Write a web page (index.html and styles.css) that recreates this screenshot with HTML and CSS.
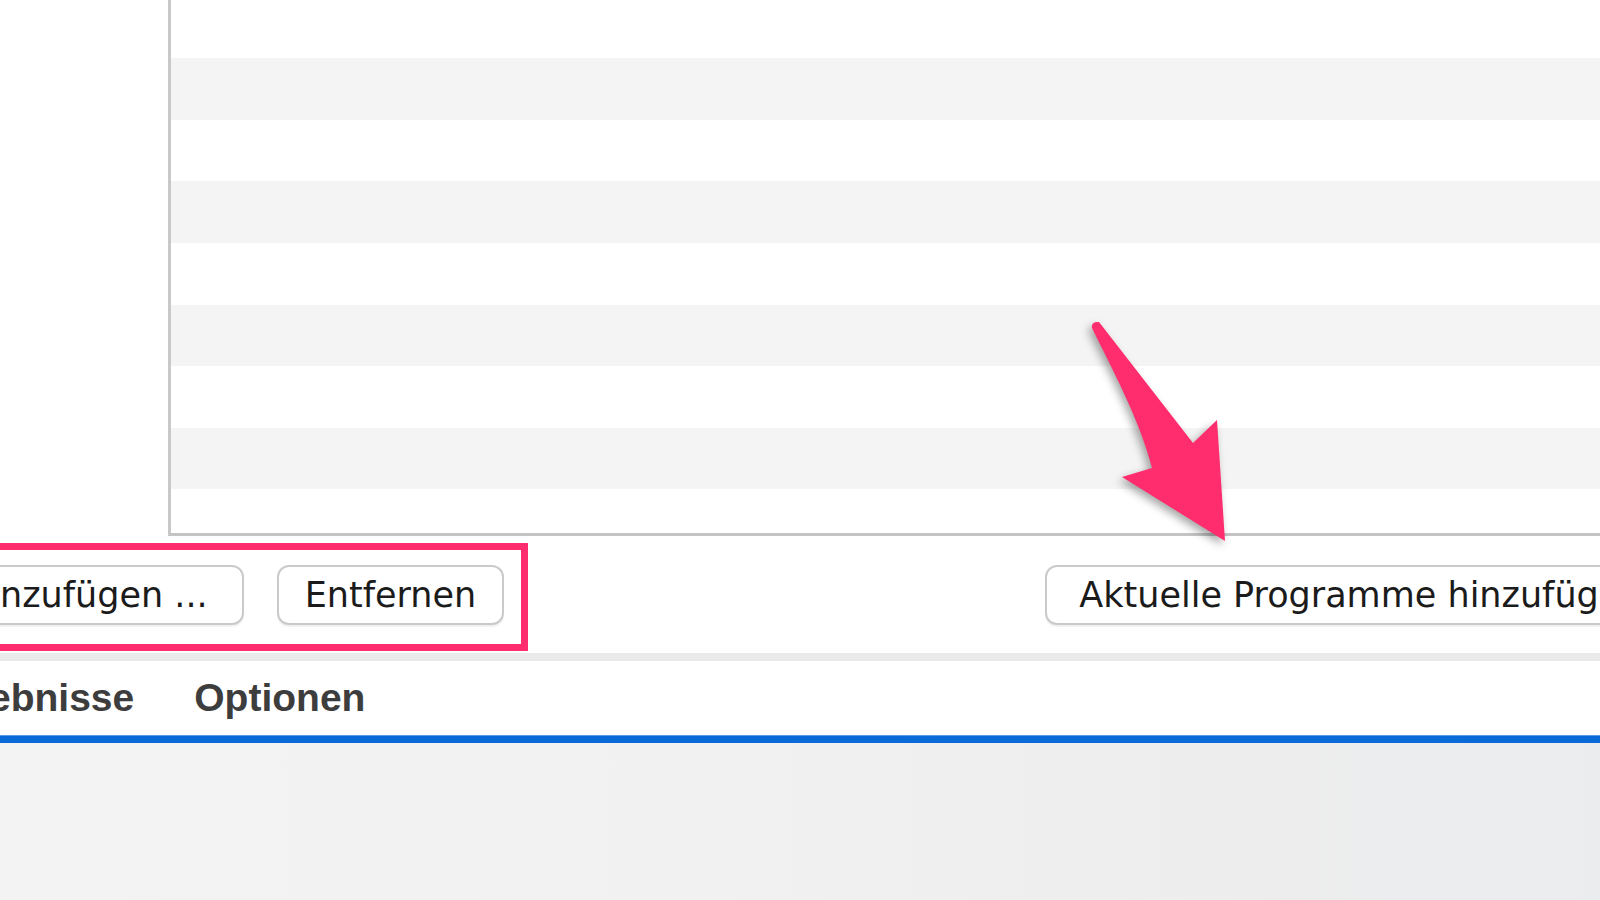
FILE: index.html
```html
<!DOCTYPE html>
<html lang="de">
<head>
<meta charset="utf-8">
<title>Programme</title>
<link rel="stylesheet" href="styles.css">
</head>
<body>
<div class="window">
  <div class="top">
    <div class="sidebar"></div>
    <div class="list">
      <div class="row row-first"></div>
      <div class="row alt"></div>
      <div class="row"></div>
      <div class="row alt"></div>
      <div class="row"></div>
      <div class="row alt"></div>
      <div class="row"></div>
      <div class="row alt"></div>
      <div class="row"></div>
    </div>
  </div>
  <div class="actions">
    <div class="btn-group">
      <button class="btn btn-add">Hinzufügen ...</button>
      <button class="btn">Entfernen</button>
    </div>
    <button class="btn btn-wide">Aktuelle Programme hinzufügen</button>
  </div>
  <div class="sep"></div>
  <div class="tabs">
    <span class="tab tab-first">Ergebnisse</span>
    <span class="tab">Optionen</span>
  </div>
  <div class="blue"></div>
  <div class="desktop"></div>
</div>

<div class="highlight"></div>
<svg class="arrow" viewBox="0 0 160 245" width="160" height="245" aria-hidden="true">
  <path d="M12 18 Q11 11 19 12 L113 133 L137 110 L145 231 L42 167 L72 158 C60 110 30 55 12 18 Z" fill="#ff2d6d"/>
</svg>
</body>
</html>
```

FILE: styles.css
```css
html, body {
  margin: 0;
  padding: 0;
}

body {
  width: 1600px;
  height: 900px;
  overflow: hidden;
  position: relative;
  background: #ffffff;
  font-family: "DejaVu Sans", "Liberation Sans", sans-serif;
}

.window {
  display: flex;
  flex-direction: column;
  width: 1600px;
  height: 900px;
}

.top {
  display: flex;
  height: 536px;
  flex: none;
}

.sidebar {
  width: 168px;
  flex: none;
  background: #ffffff;
}

.list {
  flex: 1;
  border-left: 3px solid #c8c8c8;
  border-bottom: 3px solid #c4c4c4;
  overflow: hidden;
  display: flex;
  flex-direction: column;
}

.row {
  height: 61.65px;
  flex: none;
  background: #ffffff;
}

.row-first {
  height: 58px;
}

.row.alt {
  background: #f4f4f4;
}

.actions {
  height: 117px;
  flex: none;
  display: flex;
  align-items: flex-start;
  padding-top: 29px;
  box-sizing: border-box;
  background: #ffffff;
}

.btn-group {
  display: flex;
  gap: 33px;
  margin-left: -64px;
}

.btn {
  height: 60px;
  padding: 0 26px;
  border: 2px solid #cacaca;
  border-radius: 12px;
  background: #ffffff;
  box-shadow: 0 2px 1px rgba(0, 0, 0, 0.06);
  font-family: "DejaVu Sans", "Liberation Sans", sans-serif;
  font-size: 35px;
  color: #1b1b1b;
  white-space: nowrap;
  line-height: 1;
  flex: none;
}

.btn-add {
  padding-right: 34px;
}

.btn-wide {
  margin-left: 541px;
  padding-left: 32px;
}

.sep {
  height: 8px;
  flex: none;
  background: #eaeaea;
}

.tabs {
  height: 74px;
  flex: none;
  display: flex;
  align-items: center;
  gap: 60px;
  background: #ffffff;
  font-family: "Liberation Sans", Arial, sans-serif;
  font-weight: bold;
  font-size: 39px;
  color: #3d3d3d;
}

.tab-first {
  margin-left: -76px;
}

.blue {
  height: 7px;
  flex: none;
  background: #0a6bd8;
  border-top: 1px solid #5a9be3;
}

.desktop {
  flex: 1;
  background: linear-gradient(to right, #f3f3f3 0%, #f1f1f1 45%, #eeeeee 70%, #ebecee 100%);
}

.highlight {
  position: absolute;
  left: -20px;
  top: 543px;
  width: 534px;
  height: 94px;
  border: 7px solid #ff2d6e;
}

.arrow {
  position: absolute;
  left: 1080px;
  top: 310px;
  filter: drop-shadow(-3px 4px 4px rgba(0, 0, 0, 0.35));
}
```
